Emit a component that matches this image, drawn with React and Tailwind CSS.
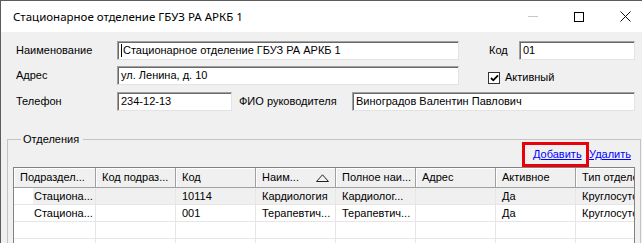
const cols = [82, 80, 80, 80, 80, 80, 80, 80];

const headers = ["Подраздел...", "Код подраз...", "Код", "Наим...", "Полное наи...", "Адрес", "Активное", "Тип отделения"];

const rows = [
  ["Стациона...", "", "10114", "Кардиология", "Кардиолог...", "", "Да", "Круглосуточный"],
  ["Стациона...", "", "001", "Терапевтич...", "Терапевтич...", "", "Да", "Круглосуточный"],
  ["", "", "", "", "", "", "", ""],
  ["", "", "", "", "", "", "", ""],
];

const Field = ({ value, className }) => (
  <div
    className={`h-[19px] bg-white border border-t-[#a0a0a0] border-l-[#a0a0a0] border-b-[#e3e3e3] border-r-[#e3e3e3] shadow-[inset_1px_1px_0_#696969] pl-[3px] flex items-center whitespace-nowrap overflow-hidden ${className}`}
  >
    {value}
  </div>
);

const SortArrow = () => (
  <svg width="13" height="8" viewBox="0 0 13 8" className="shrink-0">
    <path d="M0.5 7.5 L6.5 0.8 L12.5 7.5 Z" fill="none" stroke="#222" strokeWidth="1" />
  </svg>
);

const App = () => {
  return (
    <div
      className="w-[642px] h-[243px] overflow-hidden bg-[#f0f0f0] border-t border-l border-[#5c5c5c] text-[11px] text-black"
      style={{ fontFamily: '"Liberation Sans", Arial, sans-serif' }}
    >
      {/* title bar */}
      <div className="h-[31px] bg-white flex items-center">
        <span className="pl-[12px] text-[11.5px]" style={{ fontFamily: '"Noto Sans", sans-serif' }}>
          Стационарное отделение ГБУЗ РА АРКБ 1
        </span>
        <div className="ml-auto mr-[-6px] flex h-full">
          <div className="w-[46px] flex items-center justify-center">
            <div className="w-[10px] h-px bg-[#c8c8c8]" />
          </div>
          <div className="w-[46px] flex items-center justify-center">
            <div className="w-[10px] h-[10px] border border-black" />
          </div>
          <div className="w-[46px] flex items-center justify-center">
            <svg width="11" height="11" viewBox="0 0 11 11">
              <path d="M0.5 0.5 L10.5 10.5 M10.5 0.5 L0.5 10.5" stroke="#111" strokeWidth="1" />
            </svg>
          </div>
        </div>
      </div>

      {/* form */}
      <div className="pt-[9px] pl-[15px] flex flex-col">
        <div className="flex items-center h-[19px]">
          <span className="w-[101px]">Наименование</span>
          <Field className="w-[342px]" value={<><span className="w-px h-[13px] bg-black mr-px" />Стационарное отделение ГБУЗ РА АРКБ 1</>} />
          <span className="ml-[30px] w-[30px]">Код</span>
          <Field className="w-[116px]" value="01" />
        </div>
        <div className="flex items-center h-[19px] mt-[6px]">
          <span className="w-[101px]">Адрес</span>
          <Field className="w-[342px]" value="ул. Ленина, д. 10" />
          <div className="ml-[29px] w-[12px] h-[12px] mt-[4px] border border-[#333] bg-white flex items-center justify-center">
            <svg width="9" height="8" viewBox="0 0 9 8">
              <path d="M1 4 L3.3 6.3 L8 1.3" fill="none" stroke="#000" strokeWidth="1.8" />
            </svg>
          </div>
          <span className="ml-[5px] mt-[4px]">Активный</span>
        </div>
        <div className="flex items-center h-[19px] mt-[7px]">
          <span className="w-[101px]">Телефон</span>
          <Field className="w-[115px]" value="234-12-13" />
          <span className="ml-[7px] w-[113px]">ФИО руководителя</span>
          <Field className="w-[283px]" value="Виноградов Валентин Павлович" />
        </div>
      </div>

      {/* group box */}
      <fieldset className="mt-[22px] ml-[6px] w-[634px] border border-[#c4c4c4] px-[5px]">
        <legend className="ml-[8px] pl-[2px] pr-[4px] leading-[12px]">Отделения</legend>
        <div className="flex justify-end items-center h-[25px] mt-[-3px] pr-[4px]">
          <div className="h-[25px] w-[67px] border-[3px] border-[#e8000b] flex items-center pl-[8px]">
            <span className="text-[#0000ff] underline">Добавить</span>
          </div>
          <span className="text-[#0000ff] underline">Удалить</span>
        </div>

        <div className="w-[622px] border-t border-l border-r border-[#828282] bg-white overflow-hidden">
          <div className="flex h-[20px] bg-[#f0f0f0] border-b border-[#a0a0a0]">
            {headers.map((h, i) => (
              <div
                key={i}
                style={{ width: cols[i] }}
                className="shrink-0 border-r border-[#a0a0a0] shadow-[inset_1px_1px_0_#ffffff] flex items-center pl-[6px] pr-[6px] whitespace-nowrap overflow-hidden"
              >
                <span className="flex-1">{h}</span>
                {i === 3 && <SortArrow />}
              </div>
            ))}
          </div>
          {rows.map((r, ri) => (
            <div key={ri} className="flex h-[17px] border-b border-[#e6e6e6]">
              {r.map((c, ci) => (
                <div
                  key={ci}
                  style={{ width: cols[ci] }}
                  className={`shrink-0 flex items-center border-r border-[#e6e6e6] whitespace-nowrap overflow-hidden ${ci === 0 ? "pl-[19px]" : ""}`}
                >
                  <div className={`h-full w-full flex items-center ${ci === 0 ? "pl-[1px]" : "pl-[6px]"} ${ri === 0 ? "bg-[#f0f0f0]" : ""}`}>
                    {c}
                  </div>
                </div>
              ))}
            </div>
          ))}
        </div>
      </fieldset>
    </div>
  );
};

export default App;
